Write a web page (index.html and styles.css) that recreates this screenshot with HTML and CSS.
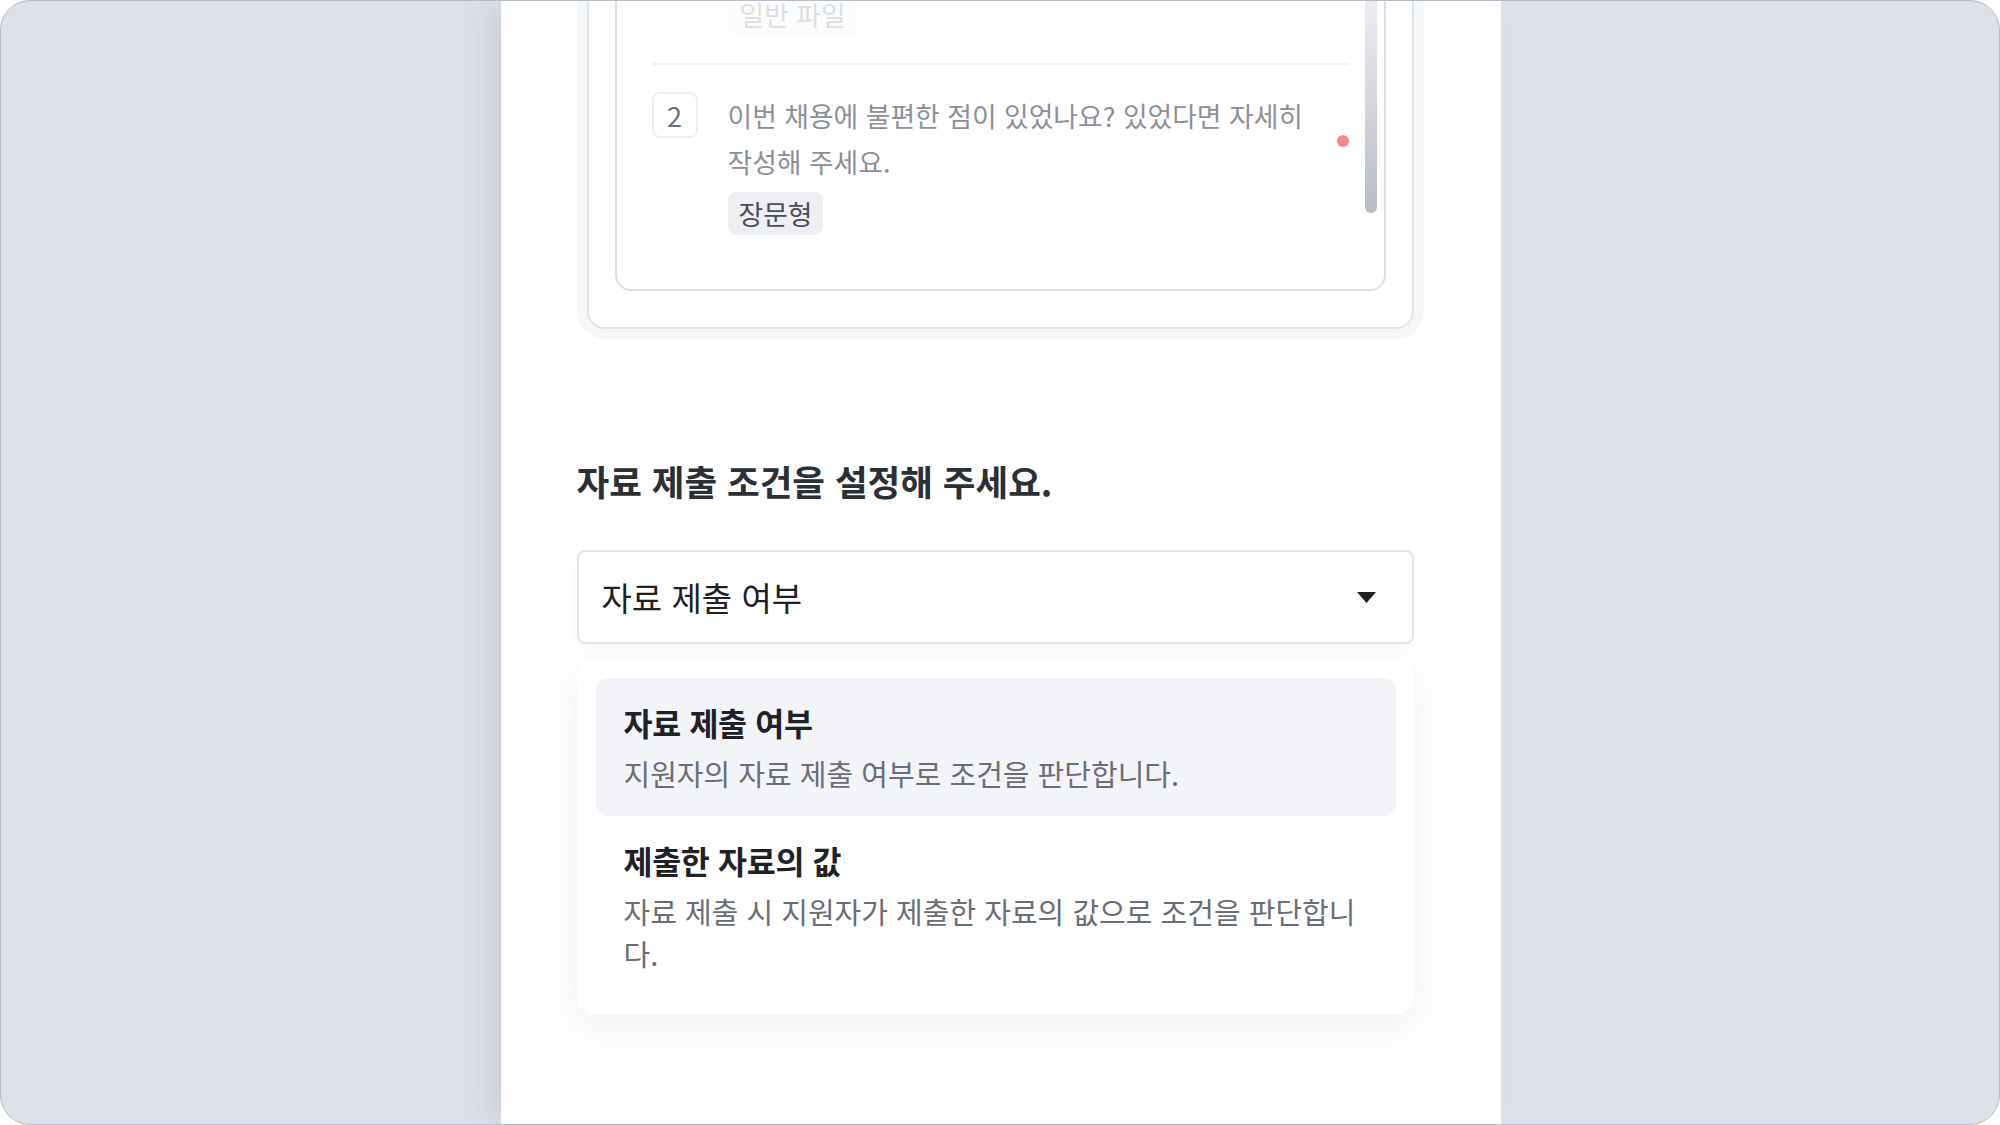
FILE: index.html
```html
<!DOCTYPE html>
<html lang="ko">
<head>
<meta charset="utf-8">
<title>자료 제출 조건</title>
<link rel="stylesheet" href="styles.css">
</head>
<body>
<div class="frame">
  <main class="panel">
    <section class="question-card">
      <div class="question-list">
        <div class="q-item q-ghost">
          <span class="tag">일반 파일</span>
        </div>
        <div class="q-item">
          <div class="q-num">2</div>
          <p class="q-text">이번 채용에 불편한 점이 있었나요? 있었다면 자세히 작성해 주세요.</p>
          <span class="q-dot"></span>
          <span class="tag q-tag">장문형</span>
        </div>
        <div class="scrollbar"></div>
      </div>
    </section>

    <h2 class="section-title">자료 제출 조건을 설정해 주세요.</h2>

    <div class="select">
      <span class="select-value">자료 제출 여부</span>
      <svg class="select-arrow" width="19" height="11" viewBox="0 0 19 11"><path d="M0 0H19L9.5 11Z" fill="#1f2024"/></svg>
    </div>

    <div class="menu">
      <div class="menu-item active">
        <div class="menu-title">자료 제출 여부</div>
        <div class="menu-desc">지원자의 자료 제출 여부로 조건을 판단합니다.</div>
      </div>
      <div class="menu-item">
        <div class="menu-title">제출한 자료의 값</div>
        <div class="menu-desc">자료 제출 시 지원자가 제출한 자료의 값으로 조건을 판단합니다.</div>
      </div>
    </div>
  </main>
</div>
</body>
</html>
```

FILE: styles.css
```css
* { box-sizing: border-box; }

html, body {
  margin: 0;
  padding: 0;
  background: #ffffff;
}

body {
  font-family: "Noto Sans CJK KR", "Noto Sans", sans-serif;
  width: 2000px;
  height: 1125px;
  overflow: hidden;
}

.frame {
  width: 2000px;
  height: 1125px;
  border: 1px solid #b4bcc8;
  border-radius: 30px;
  background: #dce0e7;
  overflow: hidden;
  display: flex;
  justify-content: center;
}

.panel {
  width: 1000px;
  height: 100%;
  background: #ffffff;
  margin-left: 1px;
  padding: 0 87px 0 76px;
  box-shadow: -16px 0 26px -8px rgba(110, 120, 140, 0.22);
  display: flex;
  flex-direction: column;
}

/* top question card */
.question-card {
  margin: -58px 0 0 10px;
  border: 2px solid #e1e4e9;
  border-radius: 18px;
  background: #ffffff;
  padding: 26px 26px 36px;
  box-shadow: 0 0 0 10px #f6f7f9;
}

.question-list {
  position: relative;
  border: 2px solid #dcdfe4;
  border-radius: 16px;
  padding: 20px 35px 23px;
  overflow: hidden;
}

.q-item {
  display: grid;
  grid-template-columns: 46px 1fr 12px;
  column-gap: 0;
  padding: 28px 0 31px;
  border-top: 2px solid #f1f2f4;
}

.q-ghost {
  display: block;
  border-top: none;
  padding: 0 0 27px 77px;
  opacity: 0.18;
}

.q-num {
  grid-column: 1;
  grid-row: 1;
  align-self: start;
  width: 46px;
  height: 46px;
  margin-top: -1px;
  border: 2px solid #eceef1;
  border-radius: 8px;
  display: flex;
  align-items: center;
  justify-content: center;
  font-size: 27px;
  color: #6c6f77;
}

.q-text {
  grid-column: 2;
  grid-row: 1;
  margin: 0 12px 0 30px;
  font-size: 26.8px;
  line-height: 46px;
  color: #8c8f97;
}

.q-dot {
  grid-column: 3;
  grid-row: 1;
  align-self: center;
  width: 12px;
  height: 12px;
  margin-top: 3px;
  border-radius: 50%;
  background: #f78684;
}

.tag {
  display: inline-flex;
  align-items: center;
  height: 43px;
  padding: 0 11px;
  border-radius: 8px;
  background: #eeeff2;
  color: #4a4d55;
  font-size: 26.8px;
}

.q-tag {
  grid-column: 2;
  grid-row: 2;
  justify-self: start;
  margin: 7px 0 0 30px;
}

.scrollbar {
  position: absolute;
  right: 7px;
  top: 0;
  width: 12px;
  height: 240px;
  border-radius: 6px;
  background: linear-gradient(to bottom, #f2f3f5 0%, #d9dbe0 45%, #b9bcc5 100%);
}

/* heading */
.section-title {
  margin: 130px 0 0;
  font-size: 35.5px;
  line-height: 44px;
  font-weight: 700;
  color: #2b2f36;
  letter-spacing: 0;
}

/* select */
.select {
  margin-top: 47px;
  height: 94px;
  border: 2px solid #e3e4eb;
  border-radius: 8px;
  padding: 0 36px 0 23px;
  display: flex;
  align-items: center;
  justify-content: space-between;
  background: #ffffff;
  box-shadow: 0 6px 12px rgba(40, 50, 80, 0.03);
}

.select-value {
  font-size: 33px;
  color: #1f2024;
}

/* dropdown */
.menu {
  margin-top: 15px;
  background: #ffffff;
  border-radius: 18px;
  padding: 19px 18px 19px 19px;
  box-shadow: 0 12px 40px rgba(40, 50, 80, 0.07);
}

.menu-item {
  padding: 24px 28px 22px;
  border-radius: 10px;
}

.menu-item.active {
  background: #f3f4f8;
}

.menu-title {
  font-size: 31.5px;
  line-height: 40px;
  font-weight: 700;
  color: #1f2126;
  letter-spacing: -0.3px;
}

.menu-desc {
  margin-top: 10px;
  font-size: 29px;
  line-height: 42px;
  color: #6b6d76;
}
```
